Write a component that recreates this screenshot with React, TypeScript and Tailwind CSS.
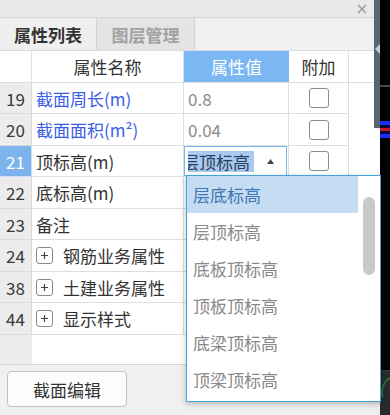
import React from "react";

type Row = {
  n: string;
  name: string;
  value?: string;
  blue?: boolean;
  active?: boolean;
  combo?: boolean;
  group?: boolean;
  h: number;
};

const rows: Row[] = [
  { n: "19", name: "截面周长(m)", blue: true, value: "0.8", h: 31 },
  { n: "20", name: "截面面积(m²)", blue: true, value: "0.04", h: 32 },
  { n: "21", name: "顶标高(m)", active: true, combo: true, h: 31 },
  { n: "22", name: "底标高(m)", h: 32 },
  { n: "23", name: "备注", h: 31 },
  { n: "24", name: "钢筋业务属性", group: true, h: 32 },
  { n: "38", name: "土建业务属性", group: true, h: 31 },
  { n: "44", name: "显示样式", group: true, h: 32 },
];

const options = ["层底标高", "层顶标高", "底板顶标高", "顶板顶标高", "底梁顶标高", "顶梁顶标高"];

const font = { fontFamily: '"Noto Sans CJK SC", "Noto Sans", sans-serif' };

function PlusBox() {
  return (
    <span className="w-[17px] h-[17px] border border-[#8a8a8a] rounded-[3px] flex items-center justify-center bg-white shrink-0">
      <svg width="9" height="9" viewBox="0 0 9 9">
        <path d="M4.5 1v7M1 4.5h7" stroke="#444" strokeWidth="1.2" />
      </svg>
    </span>
  );
}

function Check() {
  return <span className="w-[20px] h-[20px] border-[1.5px] border-[#8c8c8c] rounded-[3px] bg-white" />;
}

export default function App() {
  return (
    <div className="w-[390px] h-[415px] flex overflow-hidden relative text-[#333]" style={font}>
      {/* panel */}
      <div className="w-[374px] flex flex-col bg-[#f0f0f0]">
        <div className="h-[18px] bg-[#e9e9e9] border-b border-[#d6d6d6] flex items-center justify-end pr-[7px]">
          <svg width="10" height="10" viewBox="0 0 10 10">
            <path d="M1 1l8 8M9 1l-8 8" stroke="#9a9a9a" strokeWidth="1.4" />
          </svg>
        </div>
        <div className="h-[33px] flex border-b border-[#dcdcdc] text-[17px] font-bold leading-none">
          <div className="w-[97px] bg-[#efefef] border-r border-[#d2d2d2] flex items-center justify-center text-[#333]">
            属性列表
          </div>
          <div className="w-[98px] bg-[#e4e4e4] border-r border-[#d2d2d2] flex items-center justify-center text-[#a2a2a2]">
            图层管理
          </div>
        </div>

        {/* header */}
        <div className="h-[32px] flex bg-white border-b border-[#dedede] text-[17px] leading-none">
          <div className="w-[32px] border-r border-[#e4e4e4]" />
          <div className="w-[152px] border-r border-[#dedede] flex items-center justify-center">属性名称</div>
          <div className="w-[105px] bg-[#7ab7f3] text-white flex items-center justify-center">属性值</div>
          <div className="w-[60px] border-r border-[#dedede] flex items-center justify-center">附加</div>
          <div className="flex-1" />
        </div>

        {/* rows */}
        {rows.map((r) => (
          <div key={r.n} className="flex bg-white text-[17px] leading-none" style={{ height: r.h }}>
            <div
              className={
                "w-[32px] border-r border-b flex items-center justify-center " +
                (r.active ? "bg-[#7db4ee] text-white border-[#cfe0f3]" : "bg-[#ececec] border-[#dadada] text-[#3a3a3a]")
              }
            >
              {r.n}
            </div>
            <div
              className={
                "w-[152px] border-r border-b border-[#dedede] flex items-center gap-[10px] pl-[4px] " +
                (r.blue ? "text-[#3a5de6]" : "text-[#333]")
              }
            >
              {r.group && <PlusBox />}
              <span>{r.name}</span>
            </div>
            <div className="w-[105px] border-r border-b border-[#dedede] flex items-center text-[#8c8c8c]">
              {r.combo ? (
                <div className="w-[103px] h-full border-[1.5px] border-[#7ab8f0] flex items-center">
                  <div className="w-[66px] overflow-hidden ml-[3px]">
                    <span className="block -ml-[6px] bg-[#a9c9ee] text-[#26405c] whitespace-nowrap py-[2px]">层顶标高</span>
                  </div>
                  <svg className="ml-[13px]" width="7" height="5" viewBox="0 0 7 5">
                    <path d="M3.5 0L7 5H0z" fill="#444" />
                  </svg>
                </div>
              ) : (
                <span className="pl-[4px]">{r.value}</span>
              )}
            </div>
            <div className="w-[60px] border-r border-b border-[#dedede] flex items-center justify-center">
              {!r.group && r.n !== "23" && <Check />}
            </div>
            <div className="flex-1" />
          </div>
        ))}
        <div className="h-[30px] flex bg-white border-b border-[#d6d6d6]">
          <div className="w-[32px] bg-[#ececec]" />
          <div className="flex-1" />
        </div>

        <div className="flex-1 pt-[6px] pl-[7px]">
          <button className="w-[120px] h-[36px] bg-[#fcfcfc] border border-[#c2c2c2] rounded-[4px] text-[17px] leading-none text-[#333]">
            截面编辑
          </button>
        </div>
      </div>

      {/* right strip */}
      <div className="w-[6px] flex flex-col">
        <div className="h-[128px] bg-[#5b6571] pt-[44px]">
          <svg width="6" height="10" viewBox="0 0 6 10">
            <path d="M1 5L6 0V10z" fill="#c9ced4" />
          </svg>
        </div>
        <div className="flex-1 bg-white" />
        <div className="h-[14px] bg-[#eeeeee]" />
      </div>
      <div className="flex-1 bg-black flex flex-col">
        <div className="h-[85px]" />
        <div className="h-[2px] bg-[#4a4a4a]" />
        <div className="h-[34px]" />
        <div className="h-[4px] bg-[#1a2cff]" />
        <div className="h-[3px] bg-[#080830]" />
        <div className="h-[3px] bg-[#c0182a]" />
        <div className="h-[3px] bg-[#080830]" />
        <div className="h-[4px] bg-[#1a2cff]" />
        <div className="flex-1" />
        <div className="h-[45px] bg-[#2a2a2a] border-t border-[#3a3a3a] relative overflow-hidden">
          <svg className="absolute left-0 top-[4px]" width="10" height="40" viewBox="0 0 10 40">
            <path d="M12 2A16 16 0 0 0 3 22" stroke="#2f7a3a" strokeWidth="1.5" fill="none" />
          </svg>
        </div>
      </div>

      {/* dropdown list */}
      <div className="absolute left-[186px] top-[175px] w-[195px] h-[227px] border border-[#3ea6dc] bg-white shadow-[0_2px_6px_rgba(0,0,0,0.25)]">
        <div className="flex flex-col text-[17px] leading-none">
          {options.map((o, i) => (
            <div
              key={o}
              className={
                "h-[37px] w-[171px] flex items-center pl-[6px] " +
                (i === 0 ? "bg-[#c5dcf3] text-[#3f79b4]" : "text-[#8a8a8a]")
              }
            >
              {o}
            </div>
          ))}
        </div>
        <div className="absolute left-[176px] top-[21px] w-[12px] h-[78px] rounded-full bg-[#c9c9c9]" />
      </div>
    </div>
  );
}
